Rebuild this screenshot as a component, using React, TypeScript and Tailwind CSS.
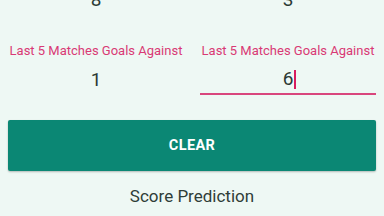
export default function App() {
  const font = { fontFamily: "Roboto, 'Noto Sans', sans-serif" };
  return (
    <div className="w-[384px] h-[216px] overflow-hidden bg-[#eef8f4] px-2" style={font}>
      {/* Previous row, scrolled mostly off screen */}
      <div className="grid grid-cols-2 gap-4 -mt-[10px] h-[20px]">
        <div className="text-center text-[19px] leading-[20px] text-[#2b3a35]">8</div>
        <div className="text-center text-[19px] leading-[20px] text-[#2b3a35]">3</div>
      </div>

      <div className="grid grid-cols-2 gap-4 mt-[33px]">
        <div>
          <p className="text-center text-[13px] leading-[16px] text-[#d93a75] whitespace-nowrap">
            Last 5 Matches Goals Against
          </p>
          <div className="mt-[6px] h-[30px] flex items-center justify-center text-[19px] text-[#2b3a35]">1</div>
        </div>
        <div>
          <p className="text-center text-[13px] leading-[16px] text-[#d93a75] whitespace-nowrap">
            Last 5 Matches Goals Against
          </p>
          <div className="mt-[6px] h-[30px] flex items-center justify-center text-[19px] text-[#2b3a35] border-b-2 border-[#d9467d]">
            <span className="ml-[3px]">6</span>
            <span className="w-[2px] h-[19px] bg-[#d81b60] ml-[1px]" />
          </div>
        </div>
      </div>

      <button className="mt-[25px] w-full h-[51px] bg-[#0b8774] text-white text-[14.5px] font-bold tracking-wide shadow-[0_1px_2px_rgba(0,0,0,0.25)] rounded-[2px]">
        CLEAR
      </button>

      <p className="mt-[15px] text-center text-[17px] leading-[20px] text-[#2f3d38]">Score Prediction</p>
    </div>
  );
}
